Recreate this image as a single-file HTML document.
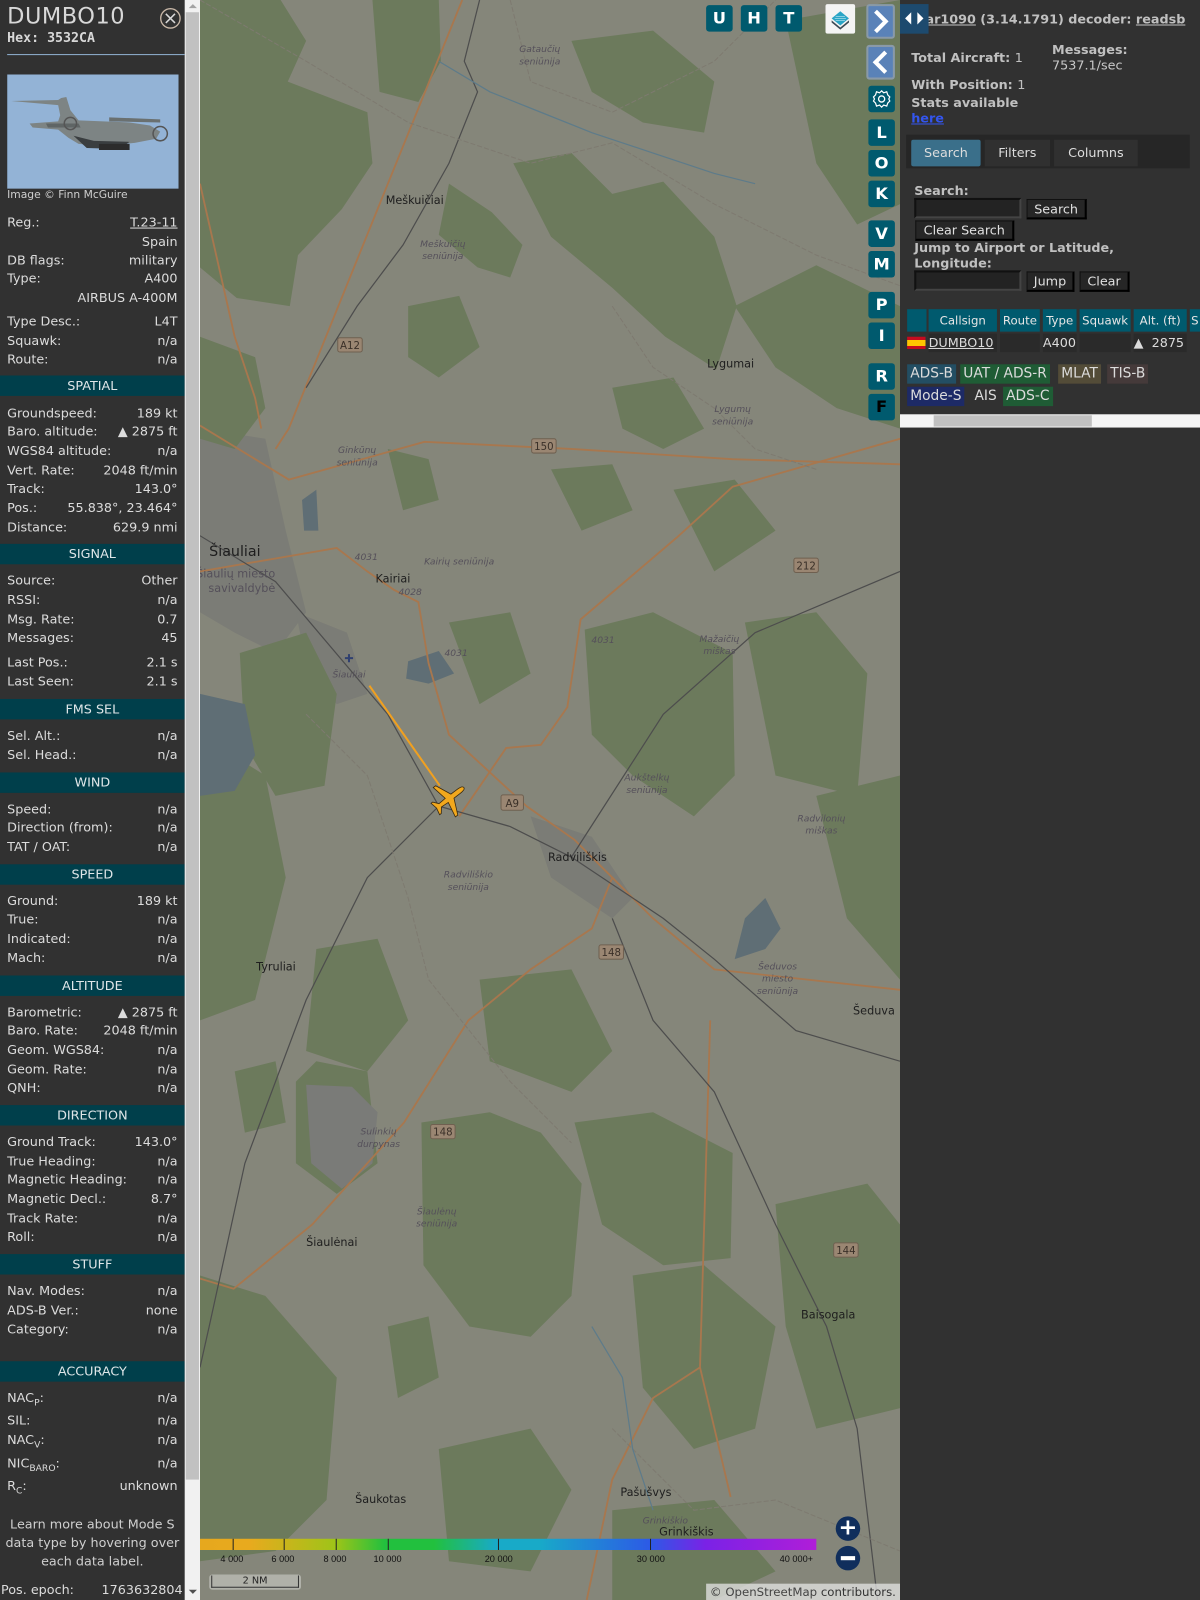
<!DOCTYPE html>
<html><head><meta charset="utf-8">
<style>
html,body{margin:0;padding:0;width:1200px;height:1600px;overflow:hidden;background:#313131;}
#w{position:absolute;left:0;top:0;width:1176px;height:1568px;transform:scale(1.020408);transform-origin:0 0;font-family:"DejaVu Sans","Liberation Sans",sans-serif;color:#dcdcdc;font-size:12.5px;}
#lp{position:absolute;left:0;top:0;width:181px;height:1568px;background:#313131;overflow:hidden;}
.r{position:absolute;left:7px;width:167px;height:18px;line-height:18px;display:flex;justify-content:space-between;white-space:nowrap;}
.h{position:absolute;left:0;width:181px;height:20px;line-height:20px;background:#003f4b;text-align:center;color:#dfe6e8;}
#sb{position:absolute;left:181px;top:0;width:15px;height:1568px;background:#f1f1f1;}
#map{position:absolute;left:196px;top:0;width:686px;height:1568px;overflow:hidden;background:#85867a;}
.mb{position:absolute;width:26px;height:26px;background:#005a6e;border-radius:3px;color:#fff;font-weight:bold;font-size:16px;text-align:center;line-height:26px;font-family:"DejaVu Sans",sans-serif;}
#rp{position:absolute;left:882px;top:0;width:294px;height:1568px;background:#313131;font-size:12.5px;}
.b{font-weight:bold;color:#c0c0c0;}
.btn{position:absolute;background:#262626;border:1px solid #111;border-right:2px solid #000;border-bottom:2px solid #000;color:#e0e0e0;height:17px;line-height:17px;text-align:center;}
.inp{position:absolute;background:#232323;border:2px solid #111;border-right-color:#444;border-bottom-color:#444;}
.th{position:absolute;top:303px;height:22px;line-height:22px;background:#005a6e;color:#e6e6e6;text-align:center;font-size:11.5px;}
.td{position:absolute;top:327px;height:18px;line-height:18px;background:#2a2a2a;}
.bd{position:absolute;height:19px;line-height:19px;padding:0 3px;font-size:13.5px;}
</style></head><body><div id="w">

<div id="lp">
<div style="position:absolute;left:7px;top:4px;font-size:22px;color:#d8d8d8;letter-spacing:0.5px;">DUMBO10</div>
<div style="position:absolute;left:7px;top:30px;font-family:'DejaVu Sans Mono',monospace;font-weight:bold;font-size:13px;color:#d8d8d8;">Hex: 3532CA</div>
<svg style="position:absolute;left:156px;top:7px" width="22" height="22"><circle cx="11" cy="11" r="9.5" fill="none" stroke="#c9b8a8" stroke-width="1.3"/><path d="M6.5 6.5 L15.5 15.5 M15.5 6.5 L6.5 15.5" stroke="#d8d8d8" stroke-width="1.5"/></svg>
<div style="position:absolute;left:7px;top:53px;width:174px;height:1px;background:#8fb0d0"></div>
<svg style="position:absolute;left:7px;top:73px" width="168" height="112" viewBox="0 0 168 112">
<rect width="168" height="112" fill="#93b3d6"/>
<path d="M4 26 L50 25 L53 23 L58 22 L62 35 L70 45 L120 47 L140 50 L150 56 L146 63 L125 67 L95 70 L70 68 L60 62 L50 54 L25 52 L22 48 L50 46 L52 40 L50 30 Z" fill="#7d8484"/>
<path d="M38 48 L70 48 L72 52 L40 52 Z" fill="#5f6565"/>
<path d="M65 60 L85 65 L120 66 L110 73 L78 72 Z" fill="#3a3e40"/>
<path d="M100 42 L150 44 L150 47 L100 46 Z" fill="#6a7070"/>
<circle cx="62" cy="48" r="6" fill="none" stroke="#555" stroke-width="1.5"/><circle cx="150" cy="58" r="7" fill="none" stroke="#555" stroke-width="1.5"/>
<rect x="90" y="68" width="30" height="6" fill="#2c2c2c"/>
</svg>
<div style="position:absolute;left:7px;top:185px;font-size:10.5px;color:#cfcfcf;">Image © Finn McGuire</div>

<div class="r" style="top:209px"><span>Reg.:</span><span style="text-decoration:underline">T.23-11</span></div>
<div class="r" style="top:228px"><span></span><span>Spain</span></div>
<div class="r" style="top:246px"><span>DB flags:</span><span>military</span></div>
<div class="r" style="top:264px"><span>Type:</span><span>A400</span></div>
<div class="r" style="top:283px"><span></span><span>AIRBUS A-400M</span></div>
<div class="r" style="top:306px"><span>Type Desc.:</span><span>L4T</span></div>
<div class="r" style="top:325px"><span>Squawk:</span><span>n/a</span></div>
<div class="r" style="top:343px"><span>Route:</span><span>n/a</span></div>
<div class="h" style="top:368px">SPATIAL</div>
<div class="r" style="top:396px"><span>Groundspeed:</span><span>189 kt</span></div>
<div class="r" style="top:414px"><span>Baro. altitude:</span><span>▲ 2875 ft</span></div>
<div class="r" style="top:433px"><span>WGS84 altitude:</span><span>n/a</span></div>
<div class="r" style="top:452px"><span>Vert. Rate:</span><span>2048 ft/min</span></div>
<div class="r" style="top:470px"><span>Track:</span><span>143.0°</span></div>
<div class="r" style="top:489px"><span>Pos.:</span><span>55.838°, 23.464°</span></div>
<div class="r" style="top:508px"><span>Distance:</span><span>629.9 nmi</span></div>
<div class="h" style="top:533px">SIGNAL</div>
<div class="r" style="top:560px"><span>Source:</span><span>Other</span></div>
<div class="r" style="top:579px"><span>RSSI:</span><span>n/a</span></div>
<div class="r" style="top:598px"><span>Msg. Rate:</span><span>0.7</span></div>
<div class="r" style="top:616px"><span>Messages:</span><span>45</span></div>
<div class="r" style="top:640px"><span>Last Pos.:</span><span>2.1 s</span></div>
<div class="r" style="top:659px"><span>Last Seen:</span><span>2.1 s</span></div>
<div class="h" style="top:685px">FMS SEL</div>
<div class="r" style="top:712px"><span>Sel. Alt.:</span><span>n/a</span></div>
<div class="r" style="top:731px"><span>Sel. Head.:</span><span>n/a</span></div>
<div class="h" style="top:757px">WIND</div>
<div class="r" style="top:784px"><span>Speed:</span><span>n/a</span></div>
<div class="r" style="top:802px"><span>Direction (from):</span><span>n/a</span></div>
<div class="r" style="top:821px"><span>TAT / OAT:</span><span>n/a</span></div>
<div class="h" style="top:847px">SPEED</div>
<div class="r" style="top:874px"><span>Ground:</span><span>189 kt</span></div>
<div class="r" style="top:892px"><span>True:</span><span>n/a</span></div>
<div class="r" style="top:911px"><span>Indicated:</span><span>n/a</span></div>
<div class="r" style="top:930px"><span>Mach:</span><span>n/a</span></div>
<div class="h" style="top:956px">ALTITUDE</div>
<div class="r" style="top:983px"><span>Barometric:</span><span>▲ 2875 ft</span></div>
<div class="r" style="top:1001px"><span>Baro. Rate:</span><span>2048 ft/min</span></div>
<div class="r" style="top:1020px"><span>Geom. WGS84:</span><span>n/a</span></div>
<div class="r" style="top:1039px"><span>Geom. Rate:</span><span>n/a</span></div>
<div class="r" style="top:1057px"><span>QNH:</span><span>n/a</span></div>
<div class="h" style="top:1083px">DIRECTION</div>
<div class="r" style="top:1110px"><span>Ground Track:</span><span>143.0°</span></div>
<div class="r" style="top:1129px"><span>True Heading:</span><span>n/a</span></div>
<div class="r" style="top:1147px"><span>Magnetic Heading:</span><span>n/a</span></div>
<div class="r" style="top:1166px"><span>Magnetic Decl.:</span><span>8.7°</span></div>
<div class="r" style="top:1185px"><span>Track Rate:</span><span>n/a</span></div>
<div class="r" style="top:1203px"><span>Roll:</span><span>n/a</span></div>
<div class="h" style="top:1229px">STUFF</div>
<div class="r" style="top:1256px"><span>Nav. Modes:</span><span>n/a</span></div>
<div class="r" style="top:1275px"><span>ADS-B Ver.:</span><span>none</span></div>
<div class="r" style="top:1294px"><span>Category:</span><span>n/a</span></div>
<div class="h" style="top:1334px">ACCURACY</div>
<div class="r" style="top:1361px"><span>NAC<sub style="font-size:9px">P</sub>:</span><span>n/a</span></div>
<div class="r" style="top:1383px"><span>SIL:</span><span>n/a</span></div>
<div class="r" style="top:1402px"><span>NAC<sub style="font-size:9px">V</sub>:</span><span>n/a</span></div>
<div class="r" style="top:1425px"><span>NIC<sub style="font-size:9px">BARO</sub>:</span><span>n/a</span></div>
<div class="r" style="top:1447px"><span>R<sub style="font-size:9px">C</sub>:</span><span>unknown</span></div>
<div style="position:absolute;left:0;top:1485px;width:181px;text-align:center;line-height:18px;color:#cfcfcf;">Learn more about Mode S data type by hovering over each data label.</div>
<div class="r" style="top:1549px;left:1px;width:178px"><span>Pos. epoch:</span><span>1763632804</span></div>
</div>

<div id="sb">
<div style="position:absolute;left:1px;top:12px;width:13px;height:1438px;background:#c1c1c1"></div>
<div style="position:absolute;left:4px;top:4px;width:0;height:0;border-left:4px solid transparent;border-right:4px solid transparent;border-bottom:4px solid #a3a3a3"></div>
<div style="position:absolute;left:4px;top:1558px;width:0;height:0;border-left:4px solid transparent;border-right:4px solid transparent;border-top:4px solid #505050"></div>
</div>

<div id="map">
<svg width="686" height="1568" viewBox="196 0 686 1568" style="position:absolute;left:0;top:0">
<g fill="#7b7c76">
<path d="M196 420 L260 430 L280 520 L300 600 L270 640 L230 620 L196 600 Z"/>
<path d="M290 600 L340 620 L360 680 L330 690 L300 650 Z"/>
<path d="M520 800 L580 820 L620 880 L600 900 L540 860 Z"/>
</g>
<g fill="#6c7a5c">
<path d="M196 0 L275 0 L300 40 L282 80 L360 110 L365 160 L335 205 L292 250 L284 300 L232 292 L196 262 Z"/>
<path d="M196 330 L250 350 L260 400 L230 440 L196 430 Z"/>
<path d="M365 0 L430 0 L432 60 L410 100 L372 90 Z"/>
<path d="M440 180 L482 208 L512 240 L500 272 L468 262 L430 230 Z"/>
<path d="M503 160 L560 150 L600 190 L650 178 L700 232 L722 300 L702 362 L652 330 L600 282 L540 232 Z"/>
<path d="M560 40 L640 30 L700 80 L690 130 L630 120 L580 90 Z"/>
<path d="M770 20 L882 0 L882 200 L840 220 L800 160 Z"/>
<path d="M720 300 L800 260 L882 300 L882 420 L820 400 L760 360 Z"/>
<path d="M400 300 L450 290 L470 340 L430 370 L400 350 Z"/>
<path d="M600 380 L660 370 L690 420 L650 440 L610 420 Z"/>
<path d="M380 440 L420 450 L430 490 L395 500 Z"/>
<path d="M540 460 L600 455 L620 500 L570 520 Z"/>
<path d="M235 640 L300 620 L330 680 L318 770 L270 780 L240 730 Z"/>
<path d="M196 720 L260 760 L280 860 L250 980 L196 1000 Z"/>
<path d="M573 617 L640 600 L718 640 L720 760 L680 800 L620 760 L580 720 Z"/>
<path d="M730 610 L800 600 L850 660 L840 780 L760 760 Z"/>
<path d="M800 780 L882 760 L882 960 L830 900 Z"/>
<path d="M440 610 L500 600 L520 660 L470 690 Z"/>
<path d="M660 480 L720 470 L760 520 L700 560 Z"/>
<path d="M310 930 L370 920 L400 1000 L360 1050 L300 1030 Z"/>
<path d="M470 960 L560 950 L600 1030 L560 1070 L480 1040 Z"/>
<path d="M413 1100 L480 1090 L530 1110 L570 1160 L560 1270 L520 1310 L460 1300 L415 1240 Z"/>
<path d="M563 1100 L640 1090 L718 1130 L716 1233 L650 1240 L590 1200 Z"/>
<path d="M196 1250 L260 1270 L330 1350 L320 1470 L270 1520 L196 1530 Z"/>
<path d="M620 1250 L690 1240 L760 1300 L740 1400 L680 1420 L630 1360 Z"/>
<path d="M760 1180 L850 1160 L882 1200 L882 1380 L800 1400 L770 1300 Z"/>
<path d="M290 1060 L310 1040 L360 1050 L370 1140 L330 1170 L290 1140 Z"/>
<path d="M430 1420 L520 1400 L560 1460 L520 1540 L440 1530 Z"/>
<path d="M600 1480 L700 1470 L760 1540 L700 1568 L600 1568 Z"/>
<path d="M380 1300 L420 1290 L430 1350 L390 1370 Z"/>
<path d="M230 1050 L270 1040 L280 1100 L240 1110 Z"/>
</g>
<path d="M300 1063 L345 1065 L370 1090 L365 1140 L335 1165 L305 1140 Z" fill="#7a7b78"/>
<g fill="#5f6e75">
<path d="M400 648 L430 638 L445 660 L420 670 L398 665 Z"/>
<path d="M196 680 L240 690 L250 740 L230 775 L196 780 Z"/>
<path d="M730 900 L750 880 L765 910 L750 930 L720 940 Z"/>
<path d="M296 490 L310 480 L312 520 L298 520 Z"/>
</g>
<g fill="none" stroke="#a8774e" stroke-width="1.8">
<path d="M453 0 L283 420 L270 440"/>
<path d="M196 180 L230 330 L250 390 L256 420"/>
<path d="M196 417 L283 470 L416 433 L560 440 L718 450 L882 455"/>
<path d="M196 560 L330 537 L360 560 L386 578 L410 590 L420 650 L440 720 L516 790 L563 823 L600 860 L640 900 L700 950 L882 970"/>
<path d="M882 430 L718 477 L663 527 L569 607 L556 693 L530 730 L496 733 L450 800"/>
<path d="M600 860 L580 910 L520 950 L459 1000 L396 1100 L306 1200 L229 1263 L196 1253"/>
<path d="M696 1000 L686 1340 L716 1467"/>
<path d="M686 1340 L640 1370 L600 1450 L575 1568"/>
</g>
<g fill="none" stroke="#4d4d4d" stroke-width="1.2">
<path d="M196 525 L270 570 L380 700 L430 790 L500 810 L560 840 L650 900 L700 940 L780 1010 L882 1040"/>
<path d="M430 790 L360 860 L300 980 L240 1140 L205 1300 L196 1340"/>
<path d="M470 0 L455 60 L468 90 L440 160 L395 240 L350 300 L300 380"/>
<path d="M600 900 L640 1000 L700 1070 L760 1200 L810 1300 L840 1400 L860 1568"/>
<path d="M560 840 L650 700 L740 620 L882 560"/>
</g>
<g fill="none" stroke="#7e7a70" stroke-width="1" stroke-dasharray="5 2">
<path d="M196 0 L300 60 L400 120 L520 160 L600 140 L700 200 L800 250 L882 280"/>
<path d="M500 0 L520 80 L600 110 L700 60 L760 0"/>
<path d="M600 300 L640 360 L700 400 L740 440 L800 460"/>
<path d="M300 700 L360 760 L400 880 L420 960 L500 1060 L560 1120"/>
<path d="M600 1400 L680 1480 L760 1470 L882 1520"/>
</g>
<path d="M430 60 L480 90 L530 110 L580 130 L640 150 L700 170 L740 180" fill="none" stroke="#5d7b8a" stroke-width="1.2"/>
<path d="M580 1300 L610 1350 L620 1420 L640 1480" fill="none" stroke="#5d7b8a" stroke-width="1.2"/>
<g font-family="DejaVu Sans,sans-serif" font-size="10" fill="#e8e0d8">
<rect x="331" y="331" width="24" height="14" rx="2" fill="#9a8672" stroke="#6f6050"/><text x="343" y="342" text-anchor="middle" fill="#3a3028">A12</text>
<rect x="521" y="430" width="24" height="14" rx="2" fill="#9a8672" stroke="#6f6050"/><text x="533" y="441" text-anchor="middle" fill="#3a3028">150</text>
<rect x="778" y="547" width="24" height="14" rx="2" fill="#9a8672" stroke="#6f6050"/><text x="790" y="558" text-anchor="middle" fill="#3a3028">212</text>
<rect x="491" y="779" width="22" height="15" rx="2" fill="#9a8672" stroke="#6f6050"/><text x="502" y="791" text-anchor="middle" fill="#3a3028">A9</text>
<rect x="587" y="926" width="24" height="14" rx="2" fill="#9a8672" stroke="#6f6050"/><text x="599" y="937" text-anchor="middle" fill="#3a3028">148</text>
<rect x="422" y="1102" width="24" height="14" rx="2" fill="#9a8672" stroke="#6f6050"/><text x="434" y="1113" text-anchor="middle" fill="#3a3028">148</text>
<rect x="817" y="1218" width="24" height="14" rx="2" fill="#9a8672" stroke="#6f6050"/><text x="829" y="1229" text-anchor="middle" fill="#3a3028">144</text>
</g>
<g font-family="DejaVu Sans,sans-serif" font-size="11" fill="#1e1e1e">
<text x="205" y="545" font-size="14">Šiauliai</text>
<text x="378" y="200">Meškuičiai</text>
<text x="693" y="360">Lygumai</text>
<text x="368" y="571">Kairiai</text>
<text x="537" y="844">Radviliškis</text>
<text x="251" y="951">Tyruliai</text>
<text x="836" y="994">Šeduva</text>
<text x="300" y="1221">Šiaulėnai</text>
<text x="785" y="1292">Baisogala</text>
<text x="348" y="1473">Šaukotas</text>
<text x="608" y="1466">Pašušvys</text>
<text x="646" y="1505">Grinkiškis</text>
</g>
<g font-family="DejaVu Sans,sans-serif" font-size="9" font-style="italic" fill="#55505a" text-anchor="middle">
<text x="529" y="51">Gataučių</text><text x="529" y="63">seniūnija</text>
<text x="434" y="242">Meškuičių</text><text x="434" y="254">seniūnija</text>
<text x="718" y="404">Lygumų</text><text x="718" y="416">seniūnija</text>
<text x="350" y="444">Ginkūnų</text><text x="350" y="456">seniūnija</text>
<text x="450" y="553">Kairių seniūnija</text>
<text x="231" y="566" font-style="normal" font-size="11">Šiaulių miesto</text><text x="237" y="580" font-style="normal" font-size="11">savivaldybė</text>
<text x="342" y="664">Šiauliai</text>
<text x="591" y="630">4031</text><text x="359" y="549">4031</text><text x="402" y="583">4028</text><text x="447" y="643">4031</text>
<text x="705" y="629">Mažaičių</text><text x="705" y="641">miškas</text>
<text x="634" y="765">Aukštelkų</text><text x="634" y="777">seniūnija</text>
<text x="805" y="805">Radvilonių</text><text x="805" y="817">miškas</text>
<text x="459" y="860">Radviliškio</text><text x="459" y="872">seniūnija</text>
<text x="762" y="950">Šeduvos</text><text x="762" y="962">miesto</text><text x="762" y="974">seniūnija</text>
<text x="371" y="1112">Sulinkių</text><text x="371" y="1124">durpynas</text>
<text x="428" y="1190">Šiaulėnų</text><text x="428" y="1202">seniūnija</text>
<text x="652" y="1493">Grinkiškio</text>
</g>
<path d="M362 672 L431 770" stroke="#f0a020" stroke-width="2"/>
<g transform="translate(441 782) rotate(53)" fill="#f2a81d" stroke="#3a2a10" stroke-width="0.8">
<path d="M0 -17 C2 -17 2.5 -14 2.5 -10 L2.5 -3 L18 4 L18 7 L2.5 4 L2 12 L7 16 L7 18 L0 16.5 L-7 18 L-7 16 L-2 12 L-2.5 4 L-18 7 L-18 4 L-2.5 -3 L-2.5 -10 C-2.5 -14 -2 -17 0 -17 Z"/>
</g>
<path d="M338 644 l3 0 l0 -3 l2 0 l0 3 l3 0 l0 2 l-3 0 l0 3 l-2 0 l0 -3 l-3 0 z" fill="#304070"/>
</svg>

<div class="mb" style="left:496px;top:5px">U</div>
<div class="mb" style="left:530px;top:5px">H</div>
<div class="mb" style="left:564px;top:5px">T</div>
<div style="position:absolute;left:613px;top:4px;width:29px;height:29px;background:#f4f4f4;border-radius:2px;">
<svg width="29" height="29"><path d="M14.5 7 L23 14 L14.5 21 L6 14 Z" fill="#2aa5c6"/><path d="M6 16 L14.5 23 L23 16 L23 18 L14.5 25 L6 18 Z" fill="#3c4a55"/><path d="M10 12 L19 12 M9 14 L20 14 M10 16 L19 16" stroke="#bfe6f0" stroke-width="0.6"/></svg></div>
<div style="position:absolute;left:653px;top:4px;width:28px;height:34px;background:#5a82b8;border:2px solid #8a9aa8;box-sizing:border-box;border-radius:3px;"><svg width="24" height="30"><path d="M7 5 L17 15 L7 25" fill="none" stroke="#fff" stroke-width="4"/></svg></div>
<div style="position:absolute;left:653px;top:44px;width:28px;height:34px;background:#5a82b8;border:2px solid #8a9aa8;box-sizing:border-box;border-radius:3px;"><svg width="24" height="30"><path d="M17 5 L7 15 L17 25" fill="none" stroke="#fff" stroke-width="4"/></svg></div>
<div class="mb" style="left:655px;top:84px;">
<svg width="26" height="26"><circle cx="13" cy="13" r="3" fill="none" stroke="#fff" stroke-width="1.3"/><path d="M13 5 L15 7 L18 6 L19 9 L21 11 L20 13 L21 15 L19 17 L18 20 L15 19 L13 21 L11 19 L8 20 L7 17 L5 15 L6 13 L5 11 L7 9 L8 6 L11 7 Z" fill="none" stroke="#fff" stroke-width="1.2"/></svg></div>
<div class="mb" style="left:655px;top:117px">L</div>
<div class="mb" style="left:655px;top:147px">O</div>
<div class="mb" style="left:655px;top:177px">K</div>
<div class="mb" style="left:655px;top:216px">V</div>
<div class="mb" style="left:655px;top:246px">M</div>
<div class="mb" style="left:655px;top:286px">P</div>
<div class="mb" style="left:655px;top:316px">I</div>
<div class="mb" style="left:655px;top:356px">R</div>
<div class="mb" style="left:655px;top:386px;color:#000">F</div>

<div style="position:absolute;left:0;top:1508px;width:604px;height:11px;background:linear-gradient(90deg,#e6a81e 0%,#e8aa1e 8%,#9ec418 22%,#22c03e 30%,#22c03e 38%,#18aac8 48%,#18aac8 55%,#2c5ae6 73%,#7a22e6 82%,#b01ed8 100%);"></div>
<div style="position:absolute;left:32px;top:1508px;width:1px;height:11px;background:#222"></div>
<div style="position:absolute;left:82px;top:1508px;width:1px;height:11px;background:#222"></div>
<div style="position:absolute;left:133px;top:1508px;width:1px;height:11px;background:#222"></div>
<div style="position:absolute;left:184px;top:1508px;width:1px;height:11px;background:#222"></div>
<div style="position:absolute;left:292px;top:1508px;width:1px;height:11px;background:#222"></div>
<div style="position:absolute;left:441px;top:1508px;width:1px;height:11px;background:#222"></div>
<div style="font-family:'Liberation Sans',sans-serif;font-size:9px;color:#111;position:absolute;top:1523px;left:0;width:700px;height:12px;">
<span style="position:absolute;left:20px">4 000</span><span style="position:absolute;left:70px">6 000</span><span style="position:absolute;left:121px">8 000</span><span style="position:absolute;left:170px">10 000</span><span style="position:absolute;left:279px">20 000</span><span style="position:absolute;left:428px">30 000</span><span style="position:absolute;left:568px">40 000+</span></div>
<div style="position:absolute;left:623px;top:1486px;width:24px;height:24px;border-radius:50%;background:#102e5c;color:#fff;text-align:center;line-height:24px;font-size:22px;font-weight:bold;">+</div>
<div style="position:absolute;left:623px;top:1515px;width:24px;height:24px;border-radius:50%;background:#102e5c;"><div style="position:absolute;left:5px;top:10px;width:14px;height:4px;background:#fff"></div></div>
<div style="position:absolute;left:9px;top:1543px;width:90px;height:15px;border-radius:3px;background:rgba(220,220,215,0.5);"><div style="position:absolute;left:2px;top:1px;width:84px;height:11px;border:1px solid #333;border-top:none;text-align:center;font-size:9.5px;line-height:12px;color:#222;">2 NM</div></div>
<div style="position:absolute;right:0;top:1552px;padding:0 4px;height:16px;line-height:16px;background:rgba(230,230,230,0.75);font-size:11.5px;color:#333;">© <span style="color:#444">OpenStreetMap</span> contributors.</div>
</div>

<div id="rp">
<div class="b" style="position:absolute;left:16px;top:11px;font-size:12.5px;"><span style="text-decoration:underline">dar1090</span> (3.14.1791) decoder: <span style="text-decoration:underline">readsb</span></div>
<div style="position:absolute;left:0;top:4px;width:28px;height:29px;background:#1d4a6e;"><svg width="28" height="29"><path d="M5 14 L11 8 L11 20 Z M23 14 L17 8 L17 20 Z" fill="#fff"/></svg></div>
<div class="b" style="position:absolute;left:11px;top:49px;">Total Aircraft: <span style="font-weight:normal">1</span></div>
<div class="b" style="position:absolute;left:149px;top:41px;">Messages:</div>
<div style="position:absolute;left:149px;top:56px;color:#c8c8c8">7537.1/sec</div>
<div class="b" style="position:absolute;left:11px;top:75px;">With Position: <span style="font-weight:normal">1</span></div>
<div class="b" style="position:absolute;left:11px;top:93px;">Stats available</div>
<div style="position:absolute;left:11px;top:108px;color:#3355ee;font-weight:bold;text-decoration:underline">here</div>
<div style="position:absolute;left:6px;top:132px;width:278px;height:33px;background:#262626;"></div>
<div style="position:absolute;left:11px;top:137px;width:68px;height:26px;line-height:25px;background:#3a6f8a;text-align:center;color:#ddd;border-radius:2px;">Search</div>
<div style="position:absolute;left:83px;top:137px;width:64px;height:26px;line-height:25px;background:#303030;text-align:center;color:#ddd;">Filters</div>
<div style="position:absolute;left:151px;top:137px;width:82px;height:26px;line-height:25px;background:#303030;text-align:center;color:#ddd;">Columns</div>
<div class="b" style="position:absolute;left:14px;top:179px;">Search:</div>
<div class="inp" style="left:14px;top:194px;width:101px;height:16px;"></div>
<div class="btn" style="left:124px;top:195px;width:56px;">Search</div>
<div class="btn" style="left:15px;top:216px;width:94px;">Clear Search</div>
<div class="b" style="position:absolute;left:14px;top:235px;line-height:15px;">Jump to Airport or Latitude,<br>Longitude:</div>
<div class="inp" style="left:14px;top:265px;width:101px;height:16px;"></div>
<div class="btn" style="left:124px;top:266px;width:44px;">Jump</div>
<div class="btn" style="left:176px;top:266px;width:46px;">Clear</div>
<div class="th" style="left:7px;width:19px;"></div>
<div class="th" style="left:28px;width:67px;">Callsign</div>
<div class="th" style="left:98px;width:39px;">Route</div>
<div class="th" style="left:140px;width:33px;">Type</div>
<div class="th" style="left:176px;width:50px;">Squawk</div>
<div class="th" style="left:229px;width:52px;">Alt. (ft)</div>
<div class="th" style="left:284px;width:10px;">S</div>
<div style="position:absolute;left:7px;top:330px;width:18px;height:12px;background:linear-gradient(#c60b1e 25%,#ffc400 25%,#ffc400 75%,#c60b1e 75%)"></div>
<div class="td" style="left:28px;width:67px;text-decoration:underline;">DUMBO10</div>
<div class="td" style="left:98px;width:39px;"></div>
<div class="td" style="left:140px;width:33px;">A400</div>
<div class="td" style="left:176px;width:50px;"></div>
<div class="td" style="left:229px;width:52px;">▲ &nbsp;2875</div>
<div class="bd" style="left:7px;top:357px;background:#234e63;">ADS-B</div>
<div class="bd" style="left:59px;top:357px;background:#1f5c35;">UAT / ADS-R</div>
<div class="bd" style="left:155px;top:357px;background:#534c38;">MLAT</div>
<div class="bd" style="left:203px;top:357px;background:#453a3a;">TIS-B</div>
<div class="bd" style="left:7px;top:379px;background:#1d2a66;">Mode-S</div>
<div class="bd" style="left:70px;top:379px;">AIS</div>
<div class="bd" style="left:101px;top:379px;background:#1f5c35;">ADS-C</div>
<div style="position:absolute;left:0;top:406px;width:294px;height:13px;background:#f5f5f5;"><div style="position:absolute;left:33px;top:1px;width:155px;height:11px;background:#c1c1c1"></div></div>
</div>

</div></body></html>
